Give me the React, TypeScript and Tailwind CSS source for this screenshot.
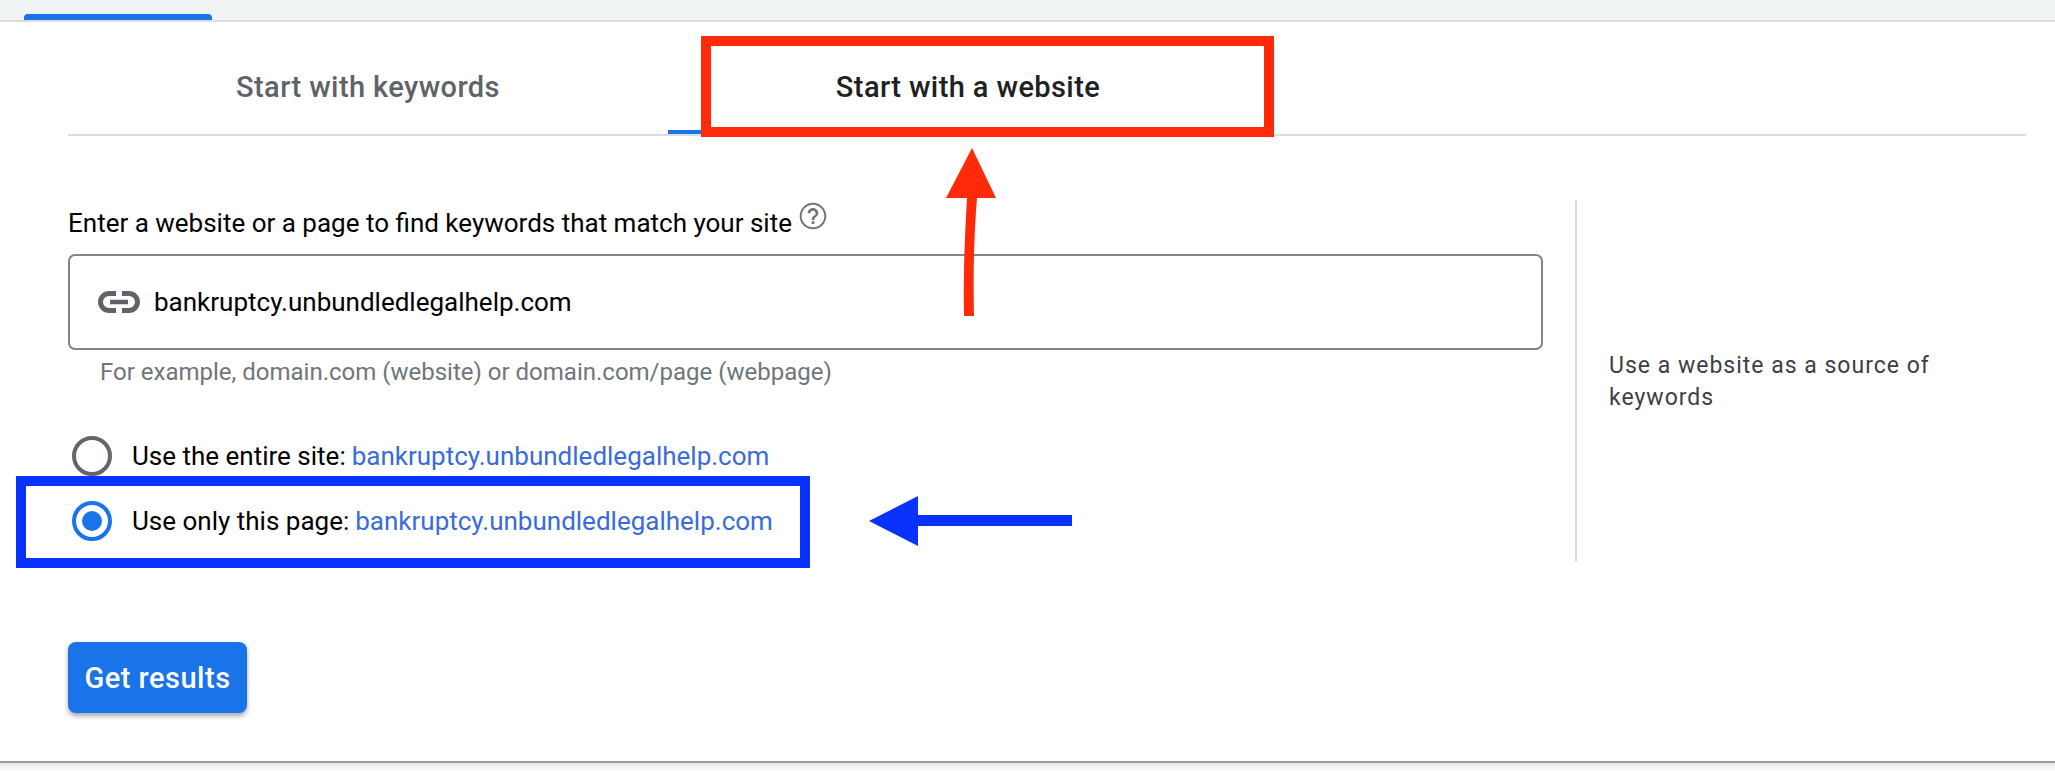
export default function App() {
  const font = "font-['Roboto',sans-serif]";
  return (
    <div className={`relative h-[771px] w-[2055px] overflow-hidden bg-white ${font}`}>
      <div className="flex h-[22px] items-end border-b-2 border-[#dadce0] bg-[#eff3f4] pl-[24px]">
        <div className="h-[6px] w-[188px] rounded-t-[4px] bg-[#1a73e8]" />
      </div>

      <div className="ml-[68px] flex h-[114px] w-[1958px] border-b-2 border-[#dadce0]">
        <div className="flex h-full w-[600px] items-center justify-center pt-[19px] text-[29px] font-medium tracking-[0.4px] text-[#5f6368]">
          Start with keywords
        </div>
        <div className="flex h-full w-[600px] items-center justify-center border-b-4 border-[#1a73e8] pt-[23px] text-[29px] font-medium tracking-[0.4px] text-[#202124]">
          Start with a website
        </div>
      </div>

      <div className="ml-[68px] mt-[64px] flex h-[362px] items-stretch">
        <div className="w-[1475px]">
          <div className="flex items-start">
            <span className="mt-[5px] text-[26px] leading-[36px] text-[#000]">
              Enter a website or a page to find keywords that match your site
            </span>
            <svg viewBox="0 0 24 24" className="ml-[5px] h-[32px] w-[32px]" fill="#70757a">
              <path d="M11 18h2v-2h-2v2zm1-16C6.48 2 2 6.48 2 12s4.48 10 10 10 10-4.48 10-10S17.52 2 12 2zm0 18.500c-4.690 0-8.500-3.810-8.500-8.500S7.310 3.500 12 3.500s8.500 3.810 8.500 8.500-3.810 8.500-8.500 8.500zm0-14.500c-2.210 0-4 1.790-4 4h2c0-1.100.9-2 2-2s2 .9 2 2c0 2-3 1.750-3 5h2c0-2.250 3-2.500 3-5 0-2.210-1.790-4-4-4z" />
            </svg>
          </div>
          <div className="mt-[13px] flex h-[96px] items-center rounded-[7px] border-2 border-[#80868b] pl-[28px]">
            <svg viewBox="0 0 42 22" className="h-[22px] w-[42px] shrink-0" fill="none" stroke="#5f6368" strokeWidth="5">
              <path d="M18 2.500 H11 a8.500 8.500 0 0 0 0 17 h7" />
              <path d="M24 2.500 H31 a8.500 8.500 0 0 1 0 17 h-7" />
              <path d="M12 11 H30" strokeWidth="4.500" />
            </svg>
            <span className="ml-[14px] text-[26px] text-[#000]">bankruptcy.unbundledlegalhelp.com</span>
          </div>
          <div className="ml-[32px] mt-[7px] text-[24px] leading-[30px] text-[#70757a]">
            For example, domain.com (website) or domain.com/page (webpage)
          </div>
          <div className="ml-[4px] mt-[49px] flex h-[40px] items-center">
            <div className="h-[40px] w-[40px] rounded-full border-[4px] border-[#63666a]" />
            <span className="ml-[20px] text-[26px] text-[#000]">Use the entire site:</span>
            <span className="ml-[6px] text-[26px] text-[#3a6bdc]">bankruptcy.unbundledlegalhelp.com</span>
          </div>
          <div className="ml-[4px] mt-[25px] flex h-[40px] items-center">
            <div className="flex h-[40px] w-[40px] items-center justify-center rounded-full border-[4px] border-[#1a73e8]">
              <div className="h-[20px] w-[20px] rounded-full bg-[#1a73e8]" />
            </div>
            <span className="ml-[20px] text-[26px] text-[#000]">Use only this page:</span>
            <span className="ml-[6px] text-[26px] text-[#3a6bdc]">bankruptcy.unbundledlegalhelp.com</span>
          </div>
        </div>
        <div className="ml-[32px] w-[2px] bg-[#dadce0]" />
        <div className="ml-[32px] mt-[150px] w-[350px] text-[23px] leading-[32px] tracking-[1px] text-[#3c4043]">
          Use a website as a source of keywords
        </div>
      </div>

      <button className="ml-[68px] mt-[80px] flex h-[71px] w-[179px] items-center justify-center rounded-[8px] bg-[#1a73e8] pt-[2px] text-[29px] font-medium tracking-[0.5px] text-white shadow-[0_3px_5px_rgba(60,64,67,0.45)]">
        Get results
      </button>

      <div className="absolute left-0 right-0 top-[761px] h-[10px] border-t-2 border-[#9a9c9e] bg-gradient-to-b from-[#e4e5e6] to-white" />

      {/* Red annotation */}
      <div className="absolute left-[701px] top-[36px] h-[101px] w-[573px] border-[10px] border-[#ff2a0a]" />
      <svg className="absolute left-[940px] top-[144px]" width="64" height="176" viewBox="0 0 64 176">
        <path d="M32 4 L56 54 L37 54 C34 90 33 130 34 172 L24 172 C23 130 25 90 27 54 L6 54 Z" fill="#ff2a0a" />
      </svg>

      {/* Blue annotation */}
      <div className="absolute left-[16px] top-[476px] h-[92px] w-[794px] border-[10px] border-[#0a32ff]" />
      <svg className="absolute left-[868px] top-[494px]" width="206" height="54" viewBox="0 0 206 54">
        <path d="M1 27 L50 2 L50 21 L204 21 L204 32 L50 32 L50 52 Z" fill="#0a32ff" />
      </svg>
    </div>
  );
}
